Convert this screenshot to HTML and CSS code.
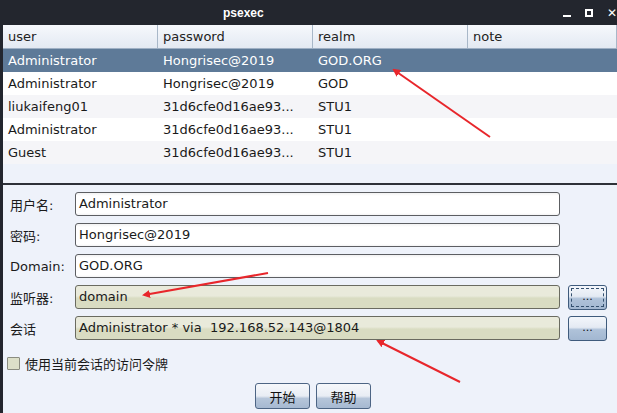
FILE: index.html
```html
<!DOCTYPE html>
<html>
<head>
<meta charset="utf-8">
<link rel="stylesheet" href="styles.css">
</head>
<body>
<div class="window">
  <div class="titlebar">
    <span class="title">psexec</span>
    <div class="controls">
      <span class="ctl-min"></span>
      <span class="ctl-max"></span>
      <span class="ctl-close">✕</span>
    </div>
  </div>
  <div class="frame">
    <div class="table">
      <div class="row head">
        <div class="cell">user</div>
        <div class="cell">password</div>
        <div class="cell">realm</div>
        <div class="cell">note</div>
      </div>
      <div class="row sel">
        <div class="cell">Administrator</div>
        <div class="cell">Hongrisec@2019</div>
        <div class="cell">GOD.ORG</div>
        <div class="cell"></div>
      </div>
      <div class="row">
        <div class="cell">Administrator</div>
        <div class="cell">Hongrisec@2019</div>
        <div class="cell">GOD</div>
        <div class="cell"></div>
      </div>
      <div class="row alt">
        <div class="cell">liukaifeng01</div>
        <div class="cell">31d6cfe0d16ae93...</div>
        <div class="cell">STU1</div>
        <div class="cell"></div>
      </div>
      <div class="row">
        <div class="cell">Administrator</div>
        <div class="cell">31d6cfe0d16ae93...</div>
        <div class="cell">STU1</div>
        <div class="cell"></div>
      </div>
      <div class="row alt">
        <div class="cell">Guest</div>
        <div class="cell">31d6cfe0d16ae93...</div>
        <div class="cell">STU1</div>
        <div class="cell"></div>
      </div>
    </div>
    <div class="form">
      <div class="frow">
        <label class="lbl">用户名:</label>
        <div class="field">Administrator</div>
        <div class="slot"></div>
      </div>
      <div class="frow">
        <label class="lbl">密码:</label>
        <div class="field">Hongrisec@2019</div>
        <div class="slot"></div>
      </div>
      <div class="frow">
        <label class="lbl">Domain:</label>
        <div class="field">GOD.ORG</div>
        <div class="slot"></div>
      </div>
      <div class="frow">
        <label class="lbl">监听器:</label>
        <div class="field ro">domain</div>
        <div class="slot"><button class="dots focus"><span>...</span></button></div>
      </div>
      <div class="frow">
        <label class="lbl">会话</label>
        <div class="field ro">Administrator * via &nbsp;192.168.52.143@1804</div>
        <div class="slot"><button class="dots"><span>...</span></button></div>
      </div>
      <div class="check">
        <span class="box"></span>
        <span class="cklbl">使用当前会话的访问令牌</span>
      </div>
      <div class="actions">
        <button class="btn">开始</button>
        <button class="btn">帮助</button>
      </div>
    </div>
  </div>
</div>
<svg class="annot" width="617" height="413" viewBox="0 0 617 413">
  <defs>
    <marker id="ah" markerWidth="8" markerHeight="8" refX="6" refY="4" orient="auto" markerUnits="userSpaceOnUse">
      <path d="M0,0 L8,4 L0,8 Z" fill="#e8262b"/>
    </marker>
  </defs>
  <line x1="490" y1="137" x2="394" y2="70" stroke="#e8262b" stroke-width="2" marker-end="url(#ah)"/>
  <line x1="268" y1="273" x2="144" y2="295" stroke="#e8262b" stroke-width="2" marker-end="url(#ah)"/>
  <line x1="460" y1="382" x2="378" y2="341" stroke="#e8262b" stroke-width="2" marker-end="url(#ah)"/>
</svg>
</body>
</html>
```
FILE: styles.css
```css
* { box-sizing: border-box; }
html, body {
  margin: 0;
  padding: 0;
  width: 617px;
  height: 413px;
  overflow: hidden;
  background: #23262e;
  font-family: "DejaVu Sans", "Noto Sans CJK SC", sans-serif;
  font-size: 13px;
  color: #1a1a1a;
}
.window {
  display: flex;
  flex-direction: column;
  height: 413px;
}
.titlebar {
  height: 25px;
  display: flex;
  align-items: center;
  background: #23262e;
  color: #ffffff;
  flex: none;
}
.title {
  padding-left: 223px;
  font-family: "Liberation Sans", sans-serif;
  font-weight: bold;
  font-size: 12px;
}
.controls {
  margin-left: auto;
  display: flex;
  align-items: center;
  gap: 14px;
  width: 54px;
  height: 25px;
}
.ctl-min {
  width: 8px;
  height: 2px;
  background: #fff;
  margin-top: 6px;
}
.ctl-max {
  width: 8px;
  height: 8px;
  border: 2px solid #fff;
}
.ctl-close {
  font-size: 12px;
  font-weight: bold;
  color: #fff;
}
.frame {
  flex: 1;
  border-left: 3px solid #23262e;
  background: #eef2fa;
  display: flex;
  flex-direction: column;
}
.table {
  height: 160px;
  border-bottom: 2px solid #2e3138;
  background: #eef2fa;
  flex: none;
}
.row {
  display: grid;
  grid-template-columns: 155px 155px 155px 1fr;
  height: 23px;
  background: #ffffff;
}
.row.alt { background: #f5f5f8; }
.row.sel { background: #5e7a98; color: #ffffff; }
.row.head {
  background: linear-gradient(#f6f8fc, #e3e9f2);
  border-bottom: 1px solid #9fb0c4;
  height: 24px;
}
.cell {
  padding-left: 5px;
  line-height: 23px;
  white-space: nowrap;
  overflow: hidden;
}
.row.head .cell {
  border-right: 1px solid #a8b7c8;
  color: #222;
}
.form {
  padding: 7px 0 0 0;
  display: flex;
  flex-direction: column;
}
.frow {
  display: flex;
  align-items: center;
  height: 24px;
  margin-bottom: 7px;
}
.lbl {
  width: 72px;
  padding-left: 7px;
  font-size: 13px;
}
.field {
  width: 485px;
  height: 24px;
  border: 1px solid #5c5e62;
  border-radius: 3px;
  background: linear-gradient(#f2f2f2 0, #ffffff 3px, #ffffff 20px, #e8e8ea 24px);
  padding-left: 3px;
  line-height: 22px;
  font-size: 13px;
  white-space: nowrap;
}
.field.ro {
  background: linear-gradient(#e9eadb 0, #e9eadb 45%, #d9dcc2 55%, #d9dcc2 100%);
  border-color: #6a6b60;
}
.slot {
  width: 47px;
  display: flex;
  justify-content: flex-end;
}
.dots {
  width: 39px;
  height: 25px;
  border: 1px solid #3f5b7c;
  border-radius: 3px;
  background: linear-gradient(#f3f6fb 0, #e4eaf3 45%, #afc2d9 55%, #a2b7d1 100%);
  padding: 2px;
  font-family: "DejaVu Sans", sans-serif;
  font-size: 11px;
  color: #111;
}
.dots span {
  display: block;
  height: 100%;
  line-height: 16px;
  border: 1px solid transparent;
}
.dots.focus span { border: 1px dashed #34506f; }
.check {
  display: flex;
  align-items: center;
  margin-top: 8px;
  padding-left: 4px;
  height: 16px;
}
.box {
  width: 13px;
  height: 13px;
  border: 1px solid #8a8c80;
  border-radius: 1px;
  background: #dcdfc8;
  margin-right: 5px;
}
.cklbl { font-size: 13px; }
.actions {
  display: flex;
  justify-content: flex-start;
  padding-left: 252px;
  gap: 6px;
  margin-top: 12px;
}
.btn {
  width: 55px;
  height: 26px;
  border: 1px solid #4d6584;
  border-radius: 3px;
  background: linear-gradient(#f6f8fb 0, #e8edf4 50%, #b6c6da 60%, #a6b9d1 100%);
  font-family: "Noto Sans CJK SC", sans-serif;
  font-size: 13px;
  color: #111;
  padding: 0;
}
.annot {
  position: absolute;
  left: 0;
  top: 0;
  pointer-events: none;
}
```
